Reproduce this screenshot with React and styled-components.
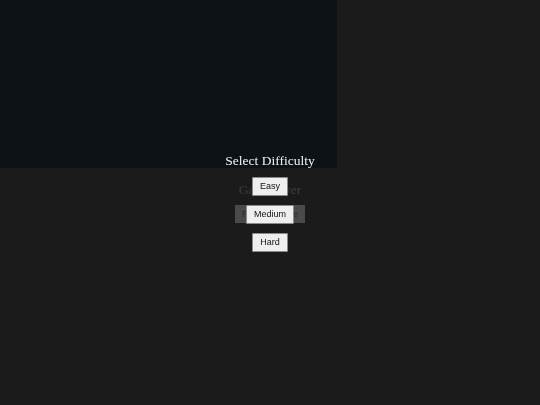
import React from 'react'
import styled, { createGlobalStyle } from 'styled-components'

const Global = createGlobalStyle`
html, body {
    margin: 0;
    padding: 0;
    background-color: #1b1b1b;
    height: 100%;
}
body {
    font-family: "Liberation Serif", serif;
}
`

let levels = [`Easy`, `Medium`, `Hard`]

let App = () => {
    return (
        <Page>
            <Global />
            <Board />
            <Layer z={1} gap={8}>
                <Title faded>Game Over</Title>
                <RestartButton>Restart Game</RestartButton>
            </Layer>
            <Layer z={2} gap={9}>
                <Title>Select Difficulty</Title>
                {
                    levels.map((level) => {
                        return <LevelButton key={level}>{level}</LevelButton>
                    })
                }
            </Layer>
        </Page>
    )
}

const Page = styled.div`
position: relative;
width: 100vw;
height: 100vh;
overflow: hidden;
`

const Board = styled.div`
width: 337px;
height: 168px;
background-color: #0d1216;
`

const Layer = styled.div`
position: fixed;
inset: 0;
z-index: ${props => props.z};
display: flex;
flex-direction: column;
align-items: center;
justify-content: center;
gap: ${props => props.gap}px;
`

const Title = styled.div`
font-family: "Liberation Serif", serif;
font-size: 13.5px;
line-height: 15px;
color: ${props => props.faded ? `#3e3e3e` : `#f2f2f2`};
`

const LevelButton = styled.button`
font-family: "Liberation Sans", Arial, sans-serif;
font-size: 9px;
line-height: 11px;
padding: 3px 7px;
margin: 0;
border: 1px solid #8a8a8a;
border-radius: 1px;
background-color: #efefef;
color: #111;
cursor: pointer;
`

const RestartButton = styled.button`
font-family: "Liberation Sans", Arial, sans-serif;
font-size: 9px;
line-height: 10px;
padding: 4px 7px;
margin: 0;
border: none;
background-color: #4a4a4a;
color: #2a2a2a;
`

export default App
